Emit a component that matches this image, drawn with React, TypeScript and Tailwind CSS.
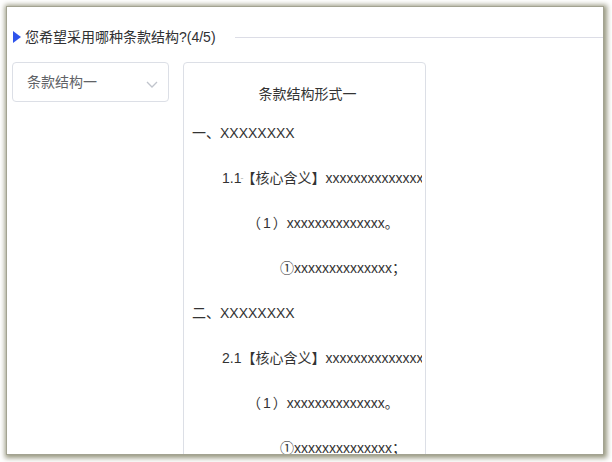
import React from "react";

const font = "font-['Liberation_Sans','Noto_Sans_CJK_SC',sans-serif]";

const Row = ({ pl, children }: { pl: string; children: React.ReactNode }) => (
  <div className={`h-[45px] flex items-center whitespace-nowrap ${pl}`}>{children}</div>
);

const Paren = () => (
  <>
    （<span className="mx-[2px]">1</span>）
  </>
);

export default function App() {
  return (
    <div className={`w-[612px] h-[462px] bg-white overflow-hidden pt-[6px] pl-[6px] ${font}`}>
      <div className="w-[598px] h-[449px] bg-white border border-[#a3a392] shadow-[1px_1px_5px_2px_rgba(125,125,95,0.8)] overflow-hidden flex flex-col">
        {/* header */}
        <div className="mt-[20px] h-[20px] flex items-center pl-[6px]">
          <div className="w-0 h-0 border-y-[6px] border-y-transparent border-l-[8px] border-l-[#2f54eb]" />
          <span className="ml-[4px] text-[14px] leading-[20px] text-[#303133]">您希望采用哪种条款结构?(4/5)</span>
          <div className="ml-[19px] flex-1 h-px bg-[#dcdde6]" />
        </div>

        {/* content */}
        <div className="mt-[15px] flex items-start pl-[5px] gap-[14px]">
          <div className="w-[157px] h-[40px] border border-[#dcdfe6] rounded-[4px] flex items-center justify-between pl-[14px] pr-[10px]">
            <span className="text-[14px] text-[#606266]">条款结构一</span>
            <svg width="12" height="7" viewBox="0 0 12 7" className="mt-[4px]">
              <polyline points="1,1 6,6 11,1" fill="none" stroke="#c0c4cc" strokeWidth="1.3" />
            </svg>
          </div>

          <div className="w-[243px] h-[420px] border border-[#dcdfe6] rounded-[4px] pt-[15px]">
            <div className="mr-[3px] overflow-hidden text-[14px] text-[#333333]">
              <div className="h-[33px] flex items-center justify-center pl-[9px]">条款结构形式一</div>
              <Row pl="pl-[8px]">一、XXXXXXXX</Row>
              <Row pl="pl-[38px]">
                1.1<span className="inline-block w-0 text-[9px] text-[#b0b0b0] -translate-x-[1px]">-</span>【核心含义】xxxxxxxxxxxxxxxxxx
              </Row>
              <Row pl="pl-[63px]">
                <Paren />xxxxxxxxxxxxxx。
              </Row>
              <Row pl="pl-[96px]">①xxxxxxxxxxxxxx；</Row>
              <Row pl="pl-[8px]">二、XXXXXXXX</Row>
              <Row pl="pl-[38px]">2.1【核心含义】xxxxxxxxxxxxxxxxxx</Row>
              <Row pl="pl-[63px]">
                <Paren />xxxxxxxxxxxxxx。
              </Row>
              <Row pl="pl-[96px]">①xxxxxxxxxxxxxx；</Row>
            </div>
          </div>
        </div>
      </div>
    </div>
  );
}
